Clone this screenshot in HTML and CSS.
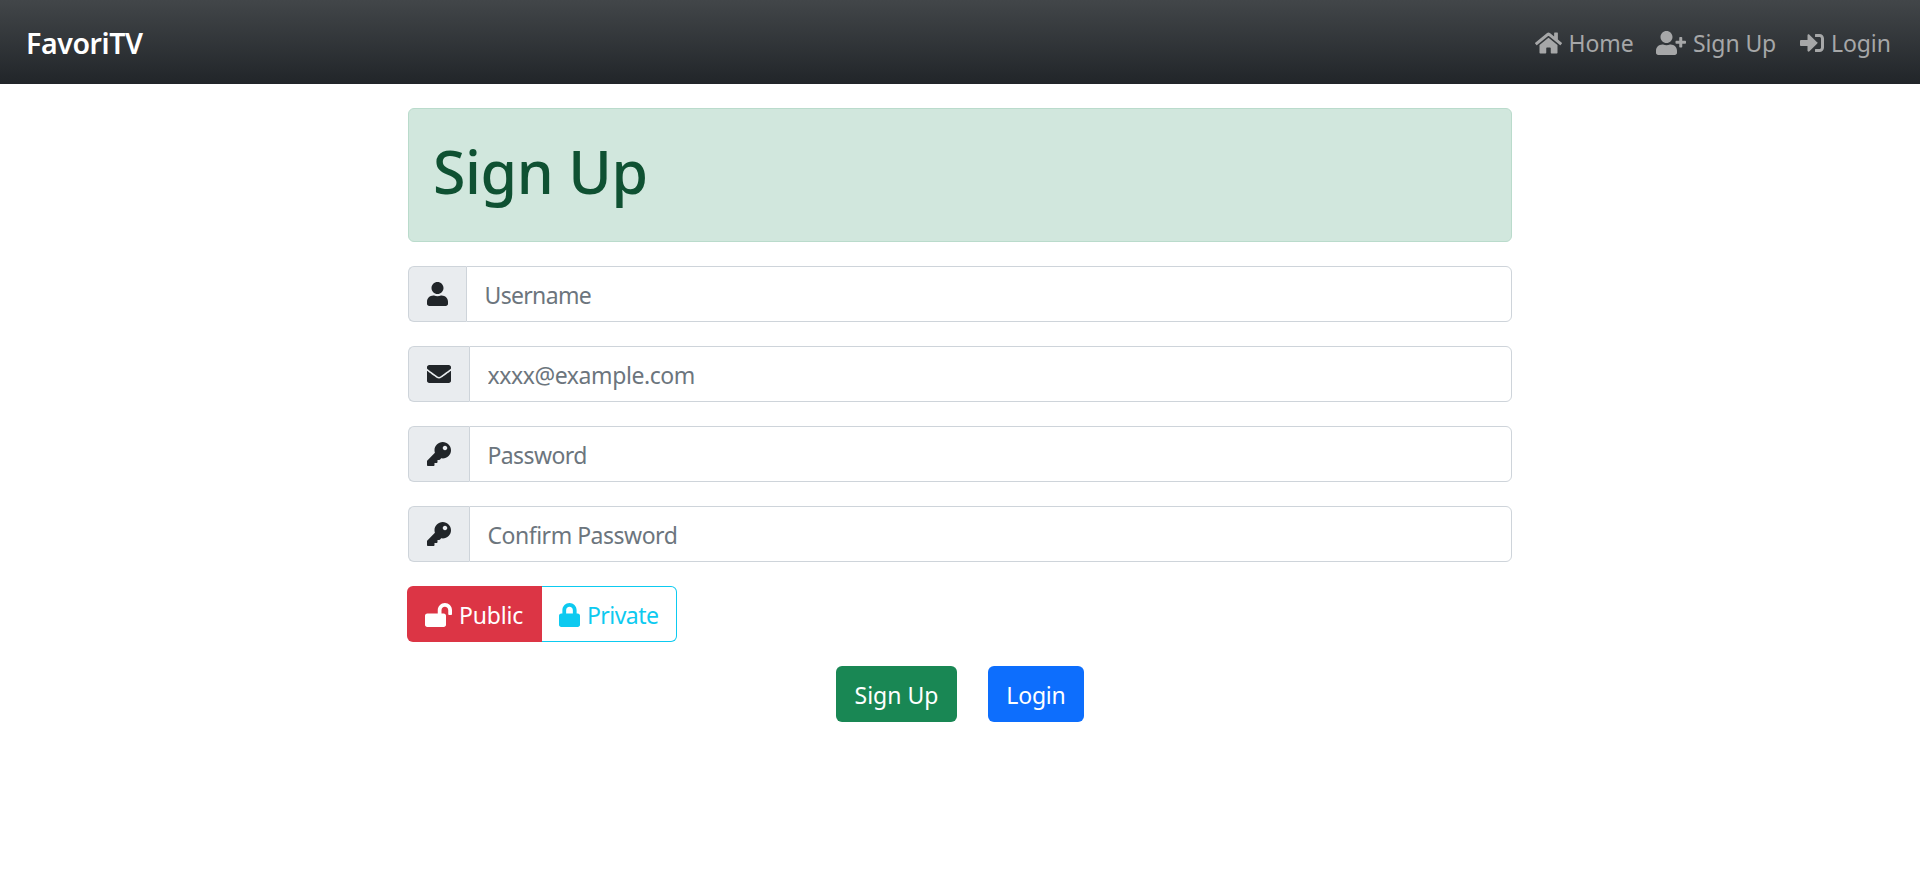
FILE: index.html
```html
<!DOCTYPE html>
<html lang="en">
<head>
<meta charset="utf-8">
<title>FavoriTV - Sign Up</title>
<link rel="stylesheet" href="styles.css">
</head>
<body>
<svg class="sprite" aria-hidden="true">
  <symbol id="home" viewBox="0 0 576 512"><path d="M280.37 148.26L96 300.11V464a16 16 0 0 0 16 16l112.06-.29a16 16 0 0 0 15.92-16V368a16 16 0 0 1 16-16h64a16 16 0 0 1 16 16v95.64a16 16 0 0 0 16 16.05L464 480a16 16 0 0 0 16-16V300L295.67 148.26a12.19 12.19 0 0 0-15.3 0zM571.6 251.47L488 182.56V44.05a12 12 0 0 0-12-12h-56a12 12 0 0 0-12 12v72.61L318.47 43a48 48 0 0 0-61 0L4.34 251.47a12 12 0 0 0-1.6 16.9l25.5 31A12 12 0 0 0 45.15 301l235.22-193.74a12.19 12.19 0 0 1 15.3 0L530.9 301a12 12 0 0 0 16.9-1.6l25.5-31a12 12 0 0 0-1.7-16.93z"/></symbol>
  <symbol id="user-plus" viewBox="0 0 640 512"><path d="M624 208h-64v-64c0-8.800-7.200-16-16-16h-32c-8.800 0-16 7.200-16 16v64h-64c-8.800 0-16 7.200-16 16v32c0 8.800 7.200 16 16 16h64v64c0 8.800 7.200 16 16 16h32c8.800 0 16-7.200 16-16v-64h64c8.800 0 16-7.200 16-16v-32c0-8.800-7.200-16-16-16zm-400 48c70.700 0 128-57.300 128-128S294.700 0 224 0 96 57.300 96 128s57.300 128 128 128zm89.600 32h-16.700c-22.200 10.200-46.900 16-72.900 16s-50.600-5.800-72.900-16h-16.700C60.200 288 0 348.200 0 422.400V464c0 26.500 21.500 48 48 48h352c26.500 0 48-21.500 48-48v-41.600c0-74.200-60.200-134.400-134.400-134.400z"/></symbol>
  <symbol id="sign-in" viewBox="0 0 512 512"><path d="M416 448h-84c-6.600 0-12-5.400-12-12v-40c0-6.600 5.400-12 12-12h84c17.700 0 32-14.300 32-32V160c0-17.700-14.300-32-32-32h-84c-6.600 0-12-5.400-12-12V76c0-6.600 5.400-12 12-12h84c53 0 96 43 96 96v192c0 53-43 96-96 96zm-47-201L201 79c-15-15-41-4.500-41 17v96H24c-13.300 0-24 10.700-24 24v80c0 13.300 10.700 24 24 24h136v96c0 21.500 26 32 41 17l168-168c9.300-9.400 9.300-24.600 0-34z"/></symbol>
  <symbol id="user" viewBox="0 0 448 512"><path d="M224 256c70.700 0 128-57.300 128-128S294.700 0 224 0 96 57.300 96 128s57.300 128 128 128zm89.600 32h-16.700c-22.200 10.200-46.900 16-72.900 16s-50.600-5.800-72.900-16h-16.700C60.200 288 0 348.200 0 422.400V464c0 26.500 21.500 48 48 48h352c26.500 0 48-21.500 48-48v-41.600c0-74.200-60.200-134.400-134.400-134.400z"/></symbol>
  <symbol id="envelope" viewBox="0 0 512 512"><path d="M502.300 190.800c3.900-3.100 9.700-.2 9.700 4.700V400c0 26.500-21.500 48-48 48H48c-26.500 0-48-21.500-48-48V195.600c0-5 5.700-7.800 9.700-4.700 22.400 17.400 52.100 39.500 154.100 113.600 21.100 15.400 56.700 47.800 92.200 47.600 35.700.3 72-32.800 92.300-47.600 102-74.100 131.600-96.300 154-113.700zM256 320c23.200.4 56.600-29.200 73.400-41.400 132.700-96.300 142.800-104.700 173.400-128.700 5.800-4.500 9.200-11.500 9.200-18.900v-19c0-26.500-21.500-48-48-48H48c-26.500 0-48 21.500-48 48v19c0 7.400 3.400 14.300 9.200 18.900 30.600 23.900 40.700 32.400 173.400 128.700 16.800 12.200 50.200 41.800 73.400 41.400z"/></symbol>
  <symbol id="key" viewBox="0 0 512 512"><path d="M512 176.001C512 273.203 433.202 352 336 352c-11.220 0-22.190-1.062-32.827-3.069l-24.012 27.014A23.999 23.999 0 0 1 261.223 384H224v40c0 13.255-10.745 24-24 24h-40v40c0 13.255-10.745 24-24 24H24c-13.255 0-24-10.745-24-24v-78.059c0-6.365 2.529-12.470 7.029-16.971l161.802-161.802C163.108 213.814 160 195.271 160 176 160 78.798 238.797.001 335.999 0 433.488-.001 512 78.511 512 176.001zM336 128c0 26.510 21.490 48 48 48s48-21.490 48-48-21.490-48-48-48-48 21.490-48 48z"/></symbol>
  <symbol id="lock-open" viewBox="0 0 576 512"><path d="M423.500 0C339.500.3 272 69.500 272 153.500V224H48c-26.500 0-48 21.500-48 48v192c0 26.500 21.500 48 48 48h352c26.500 0 48-21.500 48-48V272c0-26.500-21.500-48-48-48h-48v-71.100c0-39.600 31.700-72.500 71.300-72.900 40-.4 72.700 32.100 72.700 72v80c0 13.300 10.700 24 24 24h32c13.300 0 24-10.700 24-24v-80C576 68 507.500-.3 423.500 0z"/></symbol>
  <symbol id="lock" viewBox="0 0 448 512"><path d="M400 224h-24v-72C376 68.200 307.800 0 224 0S72 68.200 72 152v72H48c-26.500 0-48 21.500-48 48v192c0 26.500 21.500 48 48 48h352c26.500 0 48-21.500 48-48V272c0-26.500-21.500-48-48-48zm-104 0H152v-72c0-39.700 32.300-72 72-72s72 32.300 72 72v72z"/></symbol>
</svg>

<nav class="navbar">
  <a class="brand">FavoriTV</a>
  <div class="nav-links">
    <a class="nav-link nav-home"><svg class="icon icon-wide"><use href="#home"/></svg><span>Home</span></a>
    <a class="nav-link nav-signup"><svg class="icon icon-wider"><use href="#user-plus"/></svg><span>Sign Up</span></a>
    <a class="nav-link nav-login"><svg class="icon"><use href="#sign-in"/></svg><span>Login</span></a>
  </div>
</nav>

<main class="container">
  <div class="alert"><h1 class="title">Sign Up</h1></div>
  <form class="form">
    <div class="input-group"><span class="addon"><svg class="icon icon-narrow"><use href="#user"/></svg></span><input class="field field-user" type="text" placeholder="Username"></div>
    <div class="input-group"><span class="addon"><svg class="icon"><use href="#envelope"/></svg></span><input class="field field-email" type="email" placeholder="xxxx@example.com"></div>
    <div class="input-group"><span class="addon"><svg class="icon"><use href="#key"/></svg></span><input class="field field-pass" type="password" placeholder="Password"></div>
    <div class="input-group"><span class="addon"><svg class="icon"><use href="#key"/></svg></span><input class="field field-confirm" type="password" placeholder="Confirm Password"></div>
    <div class="btn-group">
      <label class="btn btn-public"><svg class="icon icon-wide"><use href="#lock-open"/></svg><span>Public</span></label>
      <label class="btn btn-private"><svg class="icon icon-narrow"><use href="#lock"/></svg><span>Private</span></label>
    </div>
    <div class="actions">
      <button class="btn btn-signup" type="button"><span>Sign Up</span></button>
      <a class="btn btn-login"><span>Login</span></a>
    </div>
  </form>
</main>
</body>
</html>
```
FILE: styles.css
```css
* { box-sizing: border-box; }

body {
  margin: 0;
  background: #fff;
  color: #212529;
  font-family: "Noto Sans", "Open Sans", sans-serif;
  font-size: 23px;
  line-height: 36px;
}

.sprite { display: none; }

.icon { flex: none; width: 24px; height: 24px; fill: currentColor; }
.icon-narrow { width: 21px; }
.icon-wide { width: 27px; }
.icon-wider { width: 30px; }

.navbar {
  display: flex;
  justify-content: space-between;
  align-items: center;
  height: 84px;
  padding: 2px 29px 0 26px;
  background: linear-gradient(180deg, #424649, #212529);
}

.brand { color: #fff; font-size: 28.500px; font-weight: 600; letter-spacing: -0.400px; }

.nav-links { display: flex; gap: 24px; color: #a6a7a8; }
.nav-link { display: flex; align-items: center; gap: 7px; white-space: nowrap; letter-spacing: -0.100px; }
.nav-home { width: 97.500px; }
.nav-signup { width: 120px; }
.nav-login { width: 91px; }

.container { width: 1104px; margin: 24px auto 0; }

.alert {
  height: 134px;
  padding: 24px;
  background: #d1e7dd;
  border: 1px solid #badbcc;
  border-radius: 6px;
  color: #0f5132;
}

.title { margin: 2px 0 0; font-size: 59px; font-weight: 500; line-height: 72px; letter-spacing: -0.400px; }

.form { display: flex; flex-direction: column; gap: 24px; margin-top: 24px; }

.input-group { display: flex; height: 56px; }

.addon {
  display: flex;
  align-items: center;
  padding: 0 18px;
  background: #e9ecef;
  border: 1px solid #ced4da;
  border-right: 0;
  border-radius: 6px 0 0 6px;
}

.field {
  flex: 1;
  min-width: 0;
  padding: 2px 17.500px 0;
  background: #fff;
  border: 1px solid #ced4da;
  border-radius: 0 6px 6px 0;
  font: inherit;
}
.field::placeholder { color: #6c757d; opacity: 1; }
.field-user::placeholder { letter-spacing: -0.670px; }
.field-email::placeholder { letter-spacing: -0.420px; }
.field-pass::placeholder { letter-spacing: -0.600px; }
.field-confirm::placeholder { letter-spacing: -0.480px; }

.btn {
  display: flex;
  align-items: center;
  justify-content: center;
  height: 56px;
  gap: 7px;
  padding: 2px 0 0;
  border: 1px solid transparent;
  border-radius: 6px;
  color: #fff;
  font: inherit;
  white-space: nowrap;
}

.btn-group { display: flex; margin-left: -1px; }
.btn-public { justify-content: flex-start; width: 135px; padding-left: 17px; background: #dc3545; border-radius: 6px 0 0 6px; letter-spacing: -0.200px; }
.btn-private { justify-content: flex-start; width: 135px; padding-left: 17px; border-color: #0dcaf0; border-left: 0; border-radius: 0 6px 6px 0; color: #0dcaf0; letter-spacing: -0.550px; }

.actions { display: flex; justify-content: center; gap: 31px; }
.btn-signup { width: 121px; background: #198754; }
.btn-login { width: 96px; background: #0d6efd; letter-spacing: -0.200px; }
```
